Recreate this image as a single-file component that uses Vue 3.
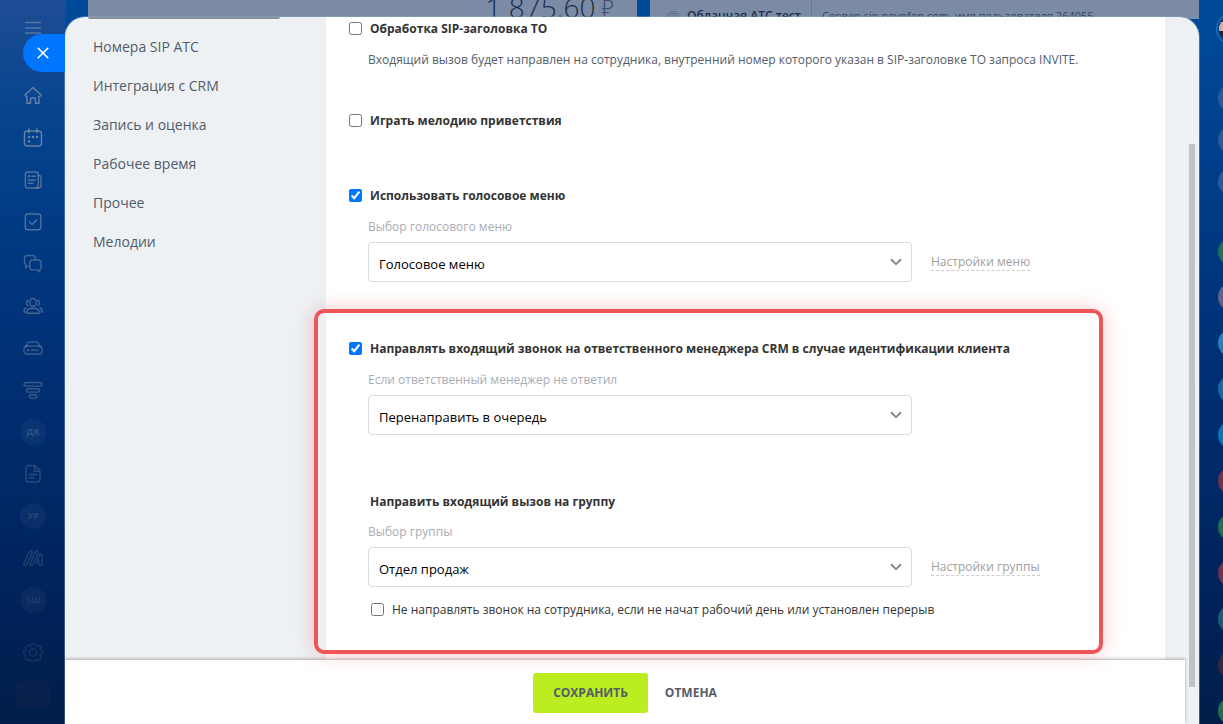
<script setup>
import { ref } from 'vue'

const railTop = ['home', 'calendar', 'news', 'tasks', 'chat', 'people', 'drive', 'funnel']

const menu = ['Номера SIP АТС', 'Интеграция с CRM', 'Запись и оценка', 'Рабочее время', 'Прочее', 'Мелодии']

const sipHeader = ref(false)
const greeting = ref(false)
const voiceMenu = ref(true)
const toManager = ref(true)
const skipIdle = ref(false)

const contacts = ['c-grey', 'c-grey', 'c-grey']
const chats = ['c-photo', 'c-sky', 'c-blue', 'c-cyan', 'c-red', 'c-green', 'c-red', 'c-teal', 'c-brown', 'c-green']
</script>

<template>
  <div class="portal">
    <nav class="rail" aria-label="Разделы">
      <button class="rail-item burger" aria-label="Меню">
        <svg width="20" height="20" viewBox="0 0 20 20"><path d="M2.500 4.500h15M2.500 10h15M2.500 15h15" /></svg>
      </button>
      <a v-for="(name, i) in railTop" :key="name" href="#" class="rail-item" :class="'fade' + (i >> 1)" :aria-label="name">
        <svg width="20" height="20" viewBox="0 0 20 20">
          <template v-if="name === 'home'">
            <path d="M10 1.500 18 9l-1 1.400h-1V17.300h-3.500v-4.300a1 1 0 0 0-1-1H8.500a1 1 0 0 0-1 1v4.300H4v-6.900H3L2 9z" />
          </template>
          <template v-else-if="name === 'calendar'">
            <rect x="1.500" y="3" width="17" height="15" rx="3" />
            <path d="M6 .8v4M14 .8v4" />
            <g class="solid"><circle cx="6" cy="9" r="1.300" /><circle cx="10" cy="9" r="1.300" /><circle cx="14" cy="9" r="1.300" /><circle cx="6" cy="13.500" r="1.300" /></g>
          </template>
          <template v-else-if="name === 'news'">
            <rect x="2.300" y="2" width="13" height="16" rx="2.500" />
            <path d="M15.300 5.500h.7a2 2 0 0 1 2 2V16a2 2 0 0 1-2 2h-3M8.800 6.300h3.500M5 10h7.300M5 13.200h5" />
            <circle class="solid" cx="5.900" cy="6.300" r="1.300" />
          </template>
          <template v-else-if="name === 'tasks'">
            <rect x="2.300" y="2" width="15.500" height="15.800" rx="2.500" />
            <path d="m6.300 9.800 2.800 2.700 4.700-4.800" />
          </template>
          <template v-else-if="name === 'chat'">
            <path d="M12.500 4.800V4a2.500 2.500 0 0 0-2.500-2.500H4A2.500 2.500 0 0 0 1.500 4v4.500c0 1 .5 1.700 1.300 2.200V14l2.200-2" />
            <path d="M9.500 6h6A2.700 2.700 0 0 1 18.200 8.700v4.600c0 1-.5 1.700-1.400 2.200V18l-3-2.100H9.500A2.700 2.700 0 0 1 6.800 13.200V8.700A2.700 2.700 0 0 1 9.500 6z" />
          </template>
          <template v-else-if="name === 'people'">
            <ellipse cx="10" cy="6.500" rx="3.300" ry="4" />
            <path d="M3.800 17.300c-.6-3.800 2.700-5 6.200-5s6.800 1.200 6.200 5zM5.300 4.500C3 4.700 3.200 8.800 5 9.500M14.700 4.500c2.300.2 2.100 4.300.3 5M3 12c-1.700.6-2.300 2-1.900 4h1M17 12c1.700.6 2.300 2 1.900 4h-1" />
          </template>
          <template v-else-if="name === 'drive'">
            <path d="M3 9 4.500 5.300A2 2 0 0 1 6.300 4h7.400a2 2 0 0 1 1.800 1.300L17 9" />
            <rect x="1" y="8" width="18" height="8" rx="2.500" />
            <path d="M8.500 12.200h6.500" />
            <circle class="solid" cx="5" cy="12.200" r="1.300" />
          </template>
          <template v-else>
            <rect x="1" y="2.500" width="18" height="3.600" rx="1.800" />
            <rect x="3.500" y="8.700" width="13" height="3.400" rx="1.700" />
            <rect x="6.300" y="14.700" width="7.500" height="3.400" rx="1.700" />
          </template>
        </svg>
      </a>
      <a href="#" class="rail-item fade4"><span class="disc">ДR</span></a>
      <a href="#" class="rail-item fade4" aria-label="Документы">
        <svg width="20" height="20" viewBox="0 0 20 20"><path d="M5.500 1.500h6.200L17 6.800v8.700a2.500 2.500 0 0 1-2.500 2.500h-9A2.500 2.500 0 0 1 3 15.500V4a2.500 2.500 0 0 1 2.500-2.500zM11.500 1.800v5.400h5M6.500 10.500h7M6.500 14h4.500" /></svg>
      </a>
      <a href="#" class="rail-item fade5"><span class="disc">УР</span></a>
      <a href="#" class="rail-item fade5" aria-label="Маркетинг">
        <svg width="20" height="20" viewBox="0 0 20 20"><path d="M1 15.500 6 4.500C7.500 1.500 10 3 9 5L4 16c-1.200 2.600-4 1.500-3-.5zM7 15.500l5-11c1.500-3 4-1.500 3 .5l-5 11c-1.200 2.600-4 1.500-3-.5zM13 15.500l3.500-8.500c.8-2 2.500-1 2.500 1v8c0 2.200-3 2.200-3 0l-.2-4" /></svg>
      </a>
      <a href="#" class="rail-item fade6"><span class="disc">ЗШ</span></a>
      <a href="#" class="rail-item fade6 gear" aria-label="Настройки">
        <svg width="20" height="20" viewBox="0 0 20 20">
          <path d="M8.300 1.500h3.400l.5 2 1.500.7 2-1 2.300 2.300-1 2 .6 1.500 1.900.3v3l-1.900.5-.6 1.400 1 2-2.300 2.300-2-1-1.500.6-.5 1.900H8.300l-.5-1.900-1.500-.6-2 1L2 16.200l1-2-.6-1.400-1.900-.5v-3L2.400 9 3 7.500l-1-2 2.300-2.300 2 1 1.500-.7z" />
          <circle cx="10" cy="10.500" r="3.700" />
        </svg>
      </a>
      <div class="rail-item"><span class="block"></span></div>
    </nav>

    <div class="backdrop">
      <div class="card balance"><span class="sum">1 875.60</span><span class="cur">₽</span></div>
      <div class="card account">
        <svg width="12" height="12" viewBox="0 0 12 12"><path d="M1 4.500h10v6H1zM3 7h6M4 2.500h5" /></svg>
        <b>Облачная АТС тест</b>
        <span class="server">Сервер sip.novofon.com, имя пользователя 264055</span>
      </div>
    </div>

    <aside class="contacts">
      <span class="avatar me"><i></i></span>
      <span v-for="(c, i) in contacts" :key="'u' + i" class="avatar" :class="c"></span>
      <span class="avatar c-green first"></span>
      <span v-for="(c, i) in chats" :key="'c' + i" class="avatar wide" :class="c"></span>
    </aside>

    <section class="slider">
      <button class="close" aria-label="Закрыть">
        <svg width="12" height="12" viewBox="0 0 12 12"><path d="m1.200 1.200 9.600 9.600m0-9.600-9.600 9.600" /></svg>
      </button>
      <div class="strip"></div>
      <div class="frame">
        <div class="body">
          <nav class="menu" aria-label="Настройки линии">
            <a v-for="m in menu" :key="m" href="#">{{ m }}</a>
          </nav>

          <main class="form">
            <label class="check"><input v-model="sipHeader" type="checkbox" /><b>Обработка SIP-заголовка TO</b></label>
            <p class="note">Входящий вызов будет направлен на сотрудника, внутренний номер которого указан в SIP-заголовке TO запроса INVITE.</p>

            <label class="check greeting"><input v-model="greeting" type="checkbox" /><b>Играть мелодию приветствия</b></label>

            <label class="check voice"><input v-model="voiceMenu" type="checkbox" /><b>Использовать голосовое меню</b></label>
            <div class="field">
              <label class="caption" for="voice">Выбор голосового меню</label>
              <div class="line">
                <span class="select">
                  <select id="voice"><option>Голосовое меню</option></select>
                  <svg width="12" height="8" viewBox="0 0 12 8"><path d="m1 1.300 5 4.900 5-4.900" /></svg>
                </span>
                <a href="#" class="link">Настройки меню</a>
              </div>
            </div>

            <section class="marked">
              <label class="check"><input v-model="toManager" type="checkbox" /><b>Направлять входящий звонок на ответственного менеджера CRM в случае идентификации клиента</b></label>
              <div class="field">
                <label class="caption" for="fallback">Если ответственный менеджер не ответил</label>
                <div class="line">
                  <span class="select">
                    <select id="fallback"><option>Перенаправить в очередь</option></select>
                    <svg width="12" height="8" viewBox="0 0 12 8"><path d="m1 1.300 5 4.900 5-4.900" /></svg>
                  </span>
                </div>
              </div>

              <h2>Направить входящий вызов на группу</h2>
              <div class="field">
                <label class="caption" for="group">Выбор группы</label>
                <div class="line">
                  <span class="select">
                    <select id="group"><option>Отдел продаж</option></select>
                    <svg width="12" height="8" viewBox="0 0 12 8"><path d="m1 1.300 5 4.900 5-4.900" /></svg>
                  </span>
                  <a href="#" class="link">Настройки группы</a>
                </div>
              </div>
              <label class="check skip"><input v-model="skipIdle" type="checkbox" /><span>Не направлять звонок на сотрудника, если не начат рабочий день или установлен перерыв</span></label>
            </section>
          </main>
        </div>

        <footer class="actions">
          <button class="save">СОХРАНИТЬ</button>
          <button class="cancel">ОТМЕНА</button>
        </footer>
      </div>
      <div class="scroll"><span class="thumb"></span></div>
    </section>
  </div>
</template>

<style>
body {
  margin: 0;
}
</style>

<style scoped>
.portal {
  position: relative;
  display: flex;
  height: 100vh;
  overflow: hidden;
  background: linear-gradient(#004b99 0%, #00408d 20%, #003780 36%, #002b6b 62%, #002258 85%, #001e4a 100%);
  font-family: "Open Sans", "Noto Sans", sans-serif;
  font-size: 12px;
  line-height: 20px;
  color: #333;
}
a {
  text-decoration: none;
}
button {
  font: inherit;
  border: 0;
  padding: 0;
  background: none;
}

.rail {
  display: flex;
  flex-direction: column;
  flex: none;
  width: 66px;
  box-sizing: border-box;
  padding-top: 7px;
  background: linear-gradient(rgba(90, 80, 140, 0.32), rgba(60, 80, 130, 0.08) 18%, transparent 40%);
}
.rail-item {
  display: flex;
  flex: none;
  align-items: center;
  justify-content: center;
  height: 42px;
  color: rgba(170, 175, 185, 0.58);
}
.burger {
  margin-bottom: 26px;
  color: rgba(170, 180, 195, 0.4);
}
.rail-item svg {
  fill: none;
  stroke: currentColor;
  stroke-width: 1.400;
  stroke-linecap: round;
  stroke-linejoin: round;
}
.rail-item .solid {
  fill: currentColor;
  stroke: none;
}
.fade1 { color: rgba(170, 175, 185, 0.46); }
.fade2 { color: rgba(170, 175, 185, 0.4); }
.fade3 { color: rgba(170, 175, 185, 0.34); }
.fade4 { color: rgba(150, 160, 175, 0.28); }
.fade5 { color: rgba(150, 160, 175, 0.22); }
.fade6 { color: rgba(150, 160, 175, 0.15); }
.gear {
  margin-top: 10px;
}
.disc {
  width: 26px;
  height: 26px;
  border-radius: 50%;
  background: rgba(255, 255, 255, 0.04);
  font-size: 9px;
  line-height: 26px;
  font-weight: 700;
  text-align: center;
}
.block {
  width: 34px;
  height: 26px;
  border-radius: 6px;
  background: rgba(30, 40, 70, 0.25);
}

.backdrop {
  display: grid;
  flex: 1;
  grid-template-columns: 1fr 1fr;
  gap: 13px;
  margin-left: 22px;
  height: 19px;
}
.card {
  display: flex;
  min-width: 0;
  overflow: hidden;
  white-space: nowrap;
  background: #7b8ba5;
}
.balance {
  justify-content: flex-end;
  padding-right: 23px;
  gap: 6px;
  color: #1c2c4a;
}
.sum {
  font-size: 28px;
  line-height: 14px;
  font-weight: 300;
}
.cur {
  font-size: 22px;
  line-height: 14px;
  font-weight: 300;
  color: #3f506e;
}
.account {
  padding-left: 17px;
  line-height: 32px;
  color: #1c2c4a;
}
.account svg {
  margin: 9px 8px 0 0;
  fill: none;
  stroke: #5d6e8b;
}
.account b {
  font-weight: 600;
}
.server {
  margin-left: 10px;
  padding-left: 10px;
  border-left: 1px solid #667795;
  font-size: 11px;
  color: #34455f;
}

.contacts {
  display: flex;
  flex-direction: column;
  flex: none;
  width: 24px;
  padding-top: 13px;
  box-sizing: border-box;
}
.avatar {
  flex: none;
  width: 28px;
  height: 28px;
  margin: 0 0 14px 19px;
  border-radius: 50%;
}
.me {
  box-sizing: border-box;
  width: 32px;
  height: 32px;
  margin: 0 0 39px 17px;
  border: 1px solid #2f7dc0;
  padding: 3px 2px;
}
.me i {
  display: block;
  height: 24px;
  border-radius: 50%;
  background: linear-gradient(#2a2226 0 20%, #d8b09c 20% 60%, #2a2226 60%);
}
.first {
  margin-top: 28px;
  margin-bottom: 17px;
}
.wide {
  margin-bottom: 18px;
}
.c-grey { background: #2c5a99; }
.c-green { background: #1f6f52; }
.c-photo { background: #5d648c; }
.c-sky { background: #2382ba; }
.c-blue { background: #1669a4; }
.c-cyan { background: #0577b4; }
.c-red { background: #6d3350; }
.c-teal { background: #1c5a73; }
.c-brown { background: #34283f; }

.slider {
  position: absolute;
  inset: 17px 24px 0 65px;
  display: flex;
  border-radius: 20px 20px 0 0;
  background: #edf1f4;
  box-shadow: 0 0 0 1px rgba(150, 175, 205, 0.4);
}
.close {
  position: absolute;
  top: 17px;
  left: -42px;
  display: flex;
  align-items: center;
  box-sizing: border-box;
  width: 42px;
  height: 38px;
  padding-left: 14px;
  border-radius: 19px 0 0 19px;
  background: #0075ff;
}
.close svg {
  fill: none;
  stroke: #fff;
  stroke-width: 1.600;
  stroke-linecap: round;
}
.strip {
  position: absolute;
  top: 0;
  left: 23px;
  width: 192px;
  height: 2px;
  border-radius: 0 0 6px 6px;
  background: #8a909c;
}
.frame {
  display: flex;
  flex: 1;
  flex-direction: column;
  min-width: 0;
}
.body {
  display: flex;
  flex: 1;
  min-height: 0;
  padding-right: 20px;
}
.menu {
  display: flex;
  flex: none;
  flex-direction: column;
  box-sizing: border-box;
  width: 261px;
  padding: 10px 28px;
}
.menu a {
  font-size: 14px;
  line-height: 39px;
  color: #525c69;
}
.form {
  flex: 1;
  min-width: 0;
  padding: 2px 23px 0;
  background: #fff;
}
.check {
  display: flex;
  align-items: center;
  height: 20px;
}
.check input {
  flex: none;
  width: 13px;
  height: 13px;
  margin: 0 8px 2px 0;
  accent-color: #0075ff;
}
.check b,
h2 {
  font-size: 12px;
  font-weight: 700;
}
.note {
  margin: 11px 0 0 19px;
  color: #535c69;
}
.greeting {
  margin-top: 41px;
}
.voice {
  margin-top: 55px;
}
.field {
  margin: 11px 0 0 19px;
}
.caption {
  display: block;
  margin-bottom: 5px;
  color: #a8adb4;
}
.line {
  display: flex;
  align-items: center;
  gap: 19px;
}
.select {
  position: relative;
  flex: 0 1 544px;
  min-width: 0;
}
.select svg {
  position: absolute;
  top: 16px;
  right: 10px;
  fill: none;
  stroke: #828b95;
  stroke-width: 2;
  pointer-events: none;
}
select {
  display: block;
  appearance: none;
  box-sizing: border-box;
  width: 100%;
  height: 40px;
  padding: 3px 30px 0 10px;
  border: 1px solid #d5dbe1;
  border-radius: 4px;
  background: #fff;
  font: 13px "Open Sans", "Noto Sans", sans-serif;
  color: #000;
}
.link {
  line-height: 16px;
  color: #a0a0a0;
  border-bottom: 1px dashed #ccc;
}
.marked {
  position: relative;
  margin-top: 27px;
  padding: 30px 0 34px;
}
.marked::after {
  content: "";
  position: absolute;
  z-index: 2;
  inset: 0 39px 0 -35px;
  border: 4px solid #ee5558;
  border-radius: 10px;
  box-shadow: 0 0 20px rgba(238, 70, 75, 0.3);
  pointer-events: none;
}
h2 {
  margin: 57px 0 0 21px;
}
h2 + .field {
  margin-top: 10px;
}
.skip {
  margin: 13px 0 0 22px;
}
.actions {
  display: flex;
  flex: none;
  align-items: center;
  justify-content: center;
  gap: 17px;
  box-sizing: border-box;
  height: 64px;
  padding-top: 2px;
  background: #fff;
  box-shadow: 0 -1px 3px rgba(0, 0, 0, 0.3);
}
.actions button {
  font-size: 12px;
  font-weight: 700;
  color: #535c69;
}
.actions .save {
  height: 40px;
  padding: 0 20px;
  border-radius: 3px;
  background: #bbed21;
}
.scroll {
  flex: none;
  width: 14px;
  display: flex;
  justify-content: center;
}
.thumb {
  width: 6px;
  margin: 127px 0 37px;
  background: #bfc3c5;
}
</style>
